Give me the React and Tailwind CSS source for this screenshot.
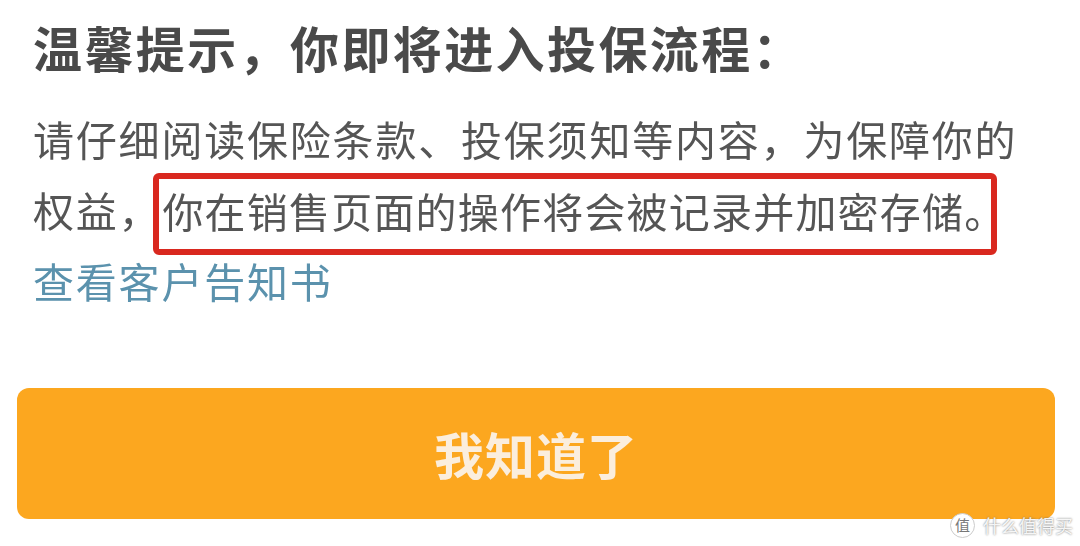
export default function App() {
  return (
    <div className="w-[1080px] h-[546px] bg-white overflow-hidden relative font-['Noto_Sans_CJK_SC','Noto_Sans',sans-serif]">
      <div className="blur-[0.5px]">
        <div className="pl-[33px] pt-[16px]">
          <h1 className="text-[49px] tracking-[2.4px] leading-[62px] font-bold text-[#4a4a4a] whitespace-nowrap">温馨提示，你即将进入投保流程：</h1>
          <div className="mt-[25px] text-[41px] tracking-[1.8px] leading-[70.5px] text-[#555] whitespace-nowrap">
            <p>请仔细阅读保险条款、投保须知等内容，为保障你的</p>
            <p className="flex items-center">
              权益，
              <span className="-ml-[8px] h-[82px] w-[844px] shrink-0 -mt-[1px] -mb-[10px] flex items-center border-[6px] border-[#d9281f] rounded-[6px] pl-[3px] pb-[6px] tracking-[1.2px]">你在销售页面的操作将会被记录并加密存储。</span>
            </p>
            <a className="block text-[#5b92ad]">查看客户告知书</a>
          </div>
        </div>
        <div className="ml-[17px] mt-[73px] h-[131px] w-[1038px] rounded-[12px] bg-[#fca71f] flex items-center justify-center">
          <span className="text-[50px] tracking-[1px] font-bold text-[#fbeedd]">我知道了</span>
        </div>
      </div>
      <div className="absolute left-[950px] top-[512px] flex items-center gap-[8px] text-[18px] text-white/90 [text-shadow:0_0_2px_#666]">
        <span className="w-[25px] h-[25px] rounded-full bg-white border border-[#ccc] text-[#777] text-[15px] flex items-center justify-center [text-shadow:none]">值</span>
        <span>什么值得买</span>
      </div>
    </div>
  );
}
